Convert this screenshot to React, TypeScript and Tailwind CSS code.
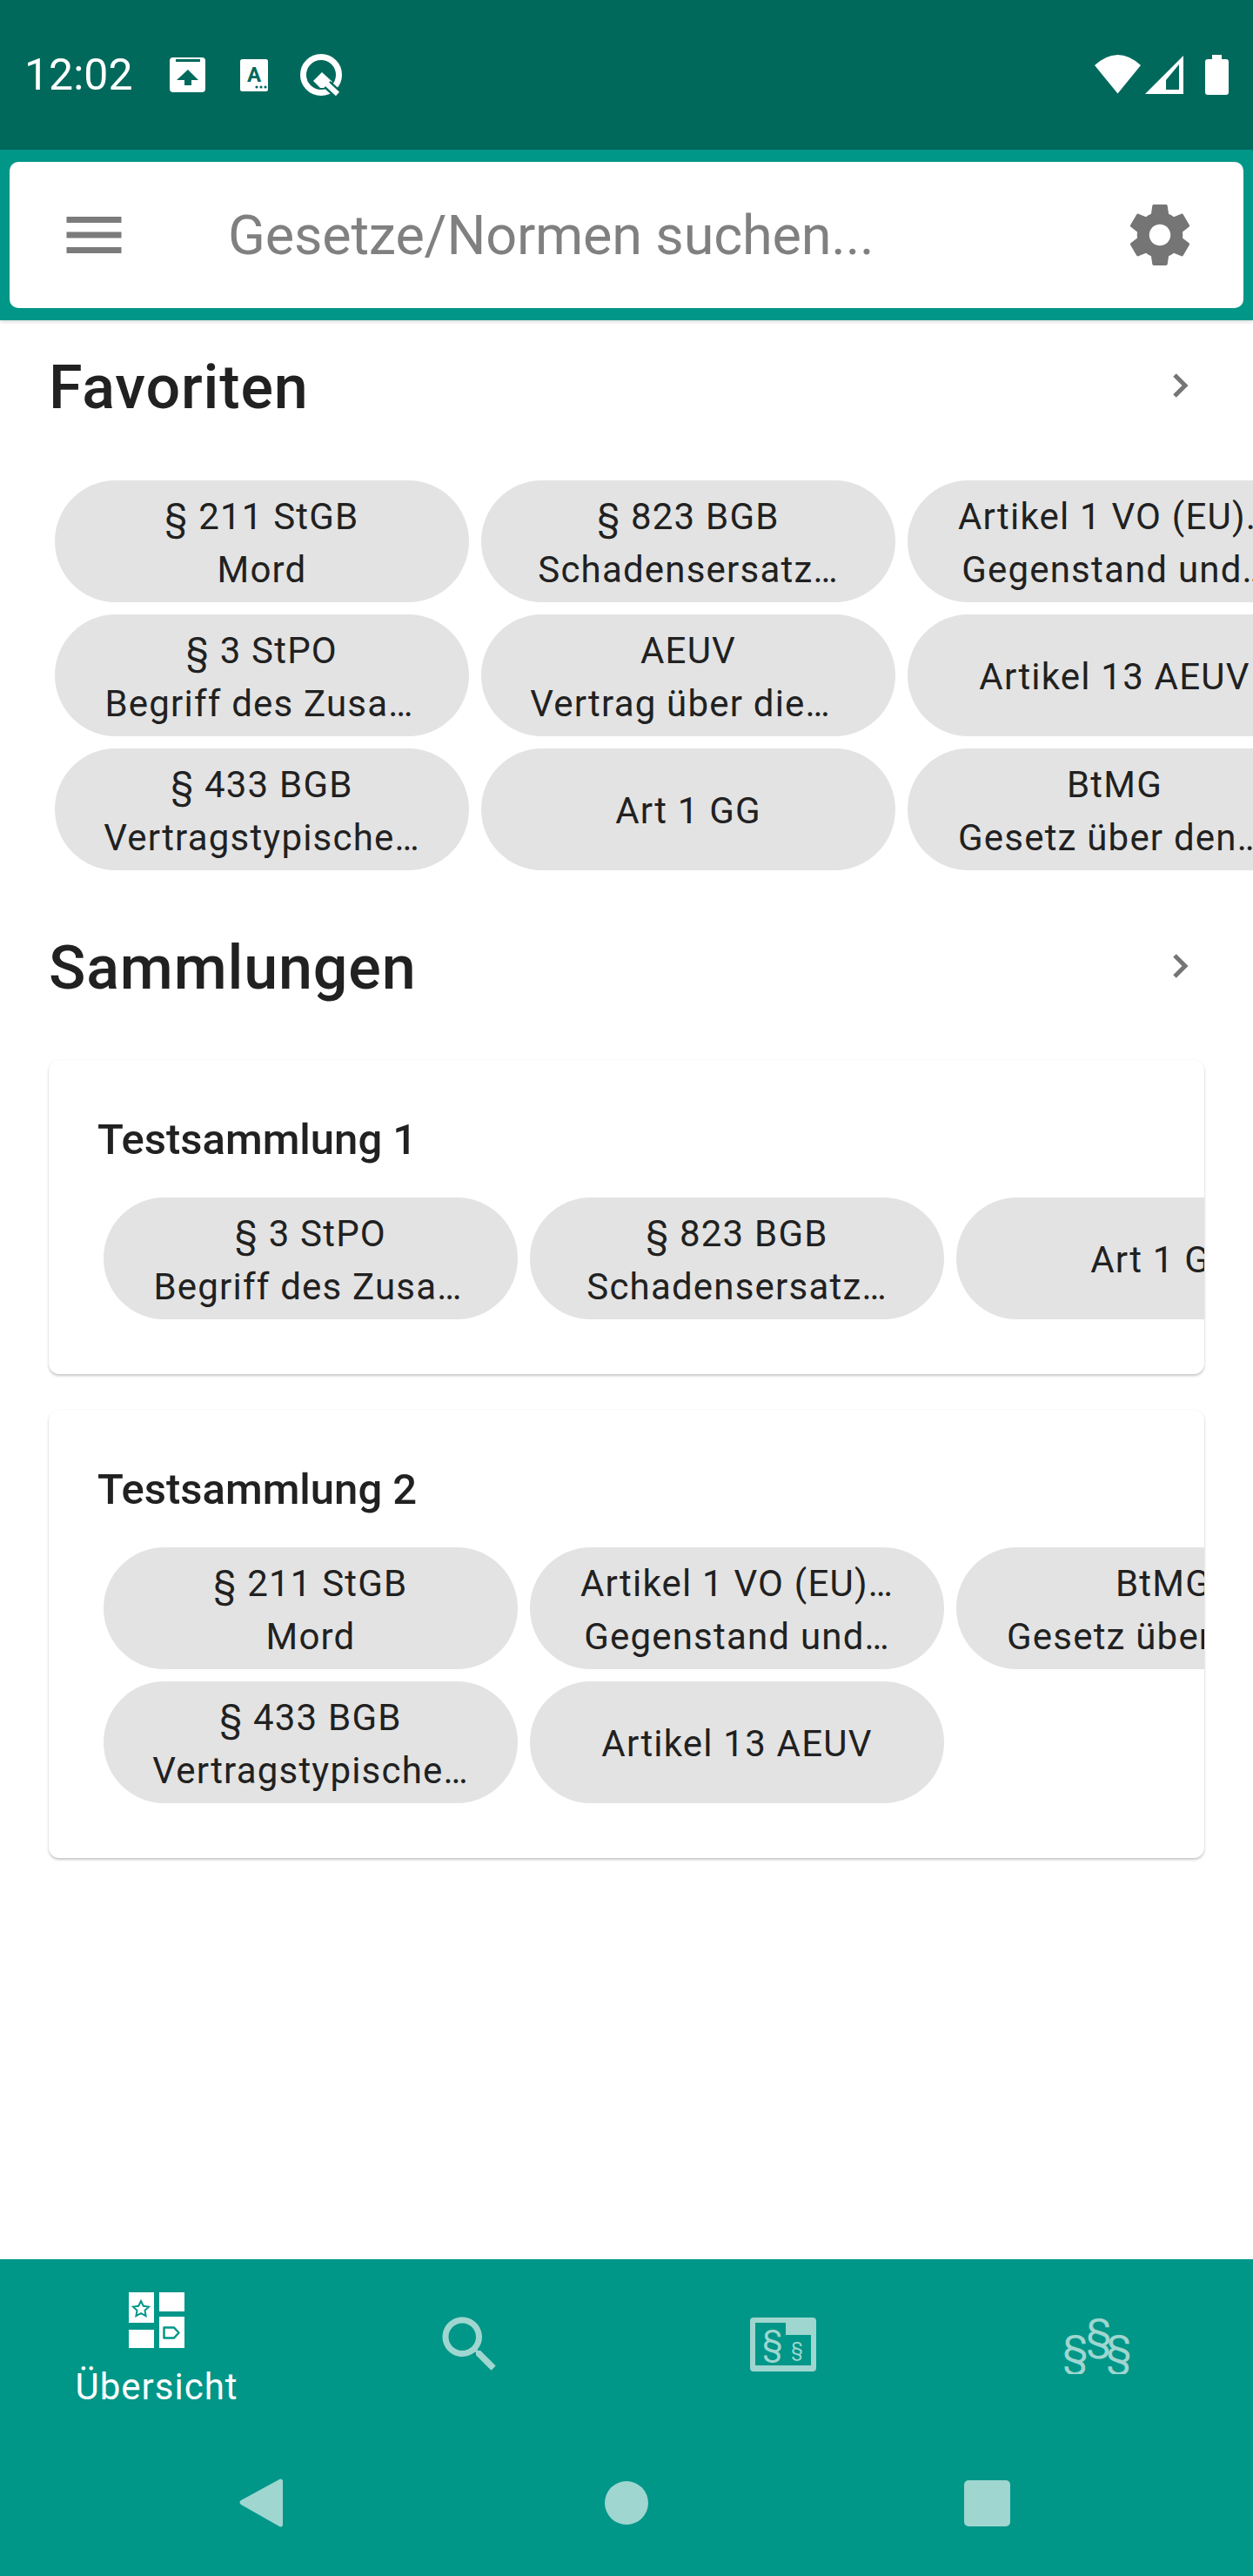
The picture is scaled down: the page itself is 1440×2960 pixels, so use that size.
const SEARCH_PATH =
  'M15.5 14h-.79l-.28-.27C15.41 12.59 16 11.11 16 9.5 16 5.91 13.09 3 9.5 3S3 5.91 3 9.5 5.91 16 9.5 16c1.61 0 3.09-.59 4.23-1.57l.27.28v.79l5 4.99L20.49 19l-4.99-5zm-6 0C7.01 14 5 11.99 5 9.5S7.01 5 9.5 5 14 7.01 14 9.5 11.99 14 9.5 14z'
const GEAR_PATH =
  'M19.43 12.98c.04-.32.07-.64.07-.98s-.03-.66-.07-.98l2.11-1.65c.19-.15.24-.42.12-.64l-2-3.46c-.12-.22-.39-.3-.61-.22l-2.49 1c-.52-.4-1.08-.73-1.69-.98l-.38-2.65C14.46 2.18 14.25 2 14 2h-4c-.25 0-.46.18-.49.42l-.38 2.65c-.61.25-1.17.59-1.69.98l-2.49-1c-.23-.09-.49 0-.61.22l-2 3.46c-.13.22-.07.49.12.64l2.11 1.65c-.04.32-.07.65-.07.98s.03.66.07.98l-2.11 1.65c-.19.15-.24.42-.12.64l2 3.46c.12.22.39.3.61.22l2.49-1c.52.4 1.08.73 1.69.98l.38 2.65c.03.24.24.42.49.42h4c.25 0 .46-.18.49-.42l.38-2.65c.61-.25 1.17-.59 1.69-.98l2.49 1c.23.09.49 0 .61-.22l2-3.46c.12-.22.07-.49-.12-.64l-2.11-1.65zM12 15.5c-1.93 0-3.5-1.57-3.5-3.5s1.57-3.5 3.5-3.5 3.5 1.57 3.5 3.5-1.57 3.5-3.5 3.5z'

interface ChipData {
  title: string
  subtitle?: string
  shift?: string
}

const favorites: ChipData[] = [
  { title: '§ 211 StGB', subtitle: 'Mord' },
  { title: '§ 823 BGB', subtitle: 'Schadensersatz…' },
  { title: 'Artikel 1 VO (EU)…', subtitle: 'Gegenstand und…' },
  { title: '§ 3 StPO', subtitle: 'Begriff des Zusa…', shift: '-translate-x-[3px]' },
  { title: 'AEUV', subtitle: 'Vertrag über die…', shift: '-translate-x-[9px]' },
  { title: 'Artikel 13 AEUV' },
  { title: '§ 433 BGB', subtitle: 'Vertragstypische…' },
  { title: 'Art 1 GG' },
  { title: 'BtMG', subtitle: 'Gesetz über den…', shift: '-translate-x-[5px]' },
]

const collectionOne: ChipData[] = [
  { title: '§ 3 StPO', subtitle: 'Begriff des Zusa…', shift: '-translate-x-[3px]' },
  { title: '§ 823 BGB', subtitle: 'Schadensersatz…' },
  { title: 'Art 1 GG' },
]

const collectionTwo: ChipData[] = [
  { title: '§ 211 StGB', subtitle: 'Mord' },
  { title: 'Artikel 1 VO (EU)…', subtitle: 'Gegenstand und…' },
  { title: 'BtMG', subtitle: 'Gesetz über den…', shift: '-translate-x-[5px]' },
  { title: '§ 433 BGB', subtitle: 'Vertragstypische…' },
  { title: 'Artikel 13 AEUV' },
]

const Chip = ({ title, subtitle, shift }: ChipData) => (
  <div className="h-[140px] w-[476px] pt-[3px] rounded-[70px] bg-[#e3e3e3] flex flex-col items-center justify-center text-[42px] leading-[61px] tracking-[1.2px] text-[#212121] whitespace-nowrap">
    <span>{title}</span>
    {subtitle && <span className={shift}>{subtitle}</span>}
  </div>
)

const ChipGrid = ({ chips }: { chips: ChipData[] }) => (
  <div className="grid grid-cols-[repeat(3,476px)] gap-[14px] overflow-hidden">
    {chips.map((chip) => (
      <Chip key={chip.title} {...chip} />
    ))}
  </div>
)

const SectionHeader = ({ title }: { title: string }) => (
  <div className="h-[154px] flex items-center justify-between pl-[56px] pr-[74px]">
    <h2 className="pt-[1px] text-[70px] tracking-[0.85px] font-medium text-[#212121]">{title}</h2>
    <svg width="18" height="28" viewBox="1348 429 18 28" fill="none" className="mb-[5px]">
      <path d="M1350 431l12 12-12 12" stroke="#757575" strokeWidth="5" />
    </svg>
  </div>
)

const CollectionCard = ({ title, chips }: { title: string; chips: ChipData[] }) => (
  <div className="mx-[56px] rounded-xl bg-white pl-[63px] pb-[63px] shadow-[0_2px_3px_rgba(0,0,0,0.22),0_0_2px_rgba(0,0,0,0.05)]">
    <h3 className="pt-[62px] pb-[36px] -ml-[7px] text-[49px] leading-[60px] font-medium text-[#212121]">
      {title}
    </h3>
    <ChipGrid chips={chips} />
  </div>
)

const StatusIcons = () => (
  <div className="flex items-center">
    <svg width="41" height="40" viewBox="195 67 41 40" className="ml-[47px]">
      <rect x="195" y="67" width="41" height="40" rx="4" fill="#fff" />
      <rect x="202" y="69" width="28" height="3" fill="#00695c" />
      <path d="M216 81l12 12h-8v6h-8v-6h-9z" fill="#00695c" />
    </svg>
    <svg width="32" height="37" viewBox="276 68 32 37" className="ml-[40px]">
      <rect x="276" y="68" width="32" height="37" rx="2.5" fill="#fff" />
      <text x="292" y="94" textAnchor="middle" fontSize="24" fontWeight="700" fill="#00695c">
        A
      </text>
      <circle cx="295" cy="100" r="1.6" fill="#00695c" />
      <circle cx="300" cy="100" r="1.6" fill="#00695c" />
      <circle cx="305" cy="100" r="1.6" fill="#00695c" />
    </svg>
    <svg width="50" height="50" viewBox="344 60 50 50" className="ml-[36px]">
      <circle cx="369" cy="85" r="20.5" fill="none" stroke="#fff" strokeWidth="7" />
      <path d="M370 82l12 11-6 7h-8l-8-8z" fill="#fff" />
      <path d="M376 96l12 11" stroke="#00695c" strokeWidth="11" />
      <path d="M374 94l14 13" stroke="#fff" strokeWidth="6" />
    </svg>
  </div>
)

const SystemIcons = () => (
  <div className="flex items-center pr-[28px]">
    <svg width="54" height="46" viewBox="1258 63 54 46">
      <path d="M1284.500 107.500 L1258 75 Q1284.500 51 1311 75 Z" fill="#fff" />
    </svg>
    <svg width="45" height="46" viewBox="1315 63 45 46" className="ml-[3px]">
      <path
        fillRule="evenodd"
        d="M1316 108L1360 64V108ZM1355 74L1340 92V103H1355Z"
        fill="#fff"
      />
    </svg>
    <svg width="27" height="46" viewBox="1385 63 27 46" className="ml-[25px]">
      <path
        d="M1393 63h11v5h5a3 3 0 0 1 3 3v35a3 3 0 0 1-3 3h-21a3 3 0 0 1-3-3V71a3 3 0 0 1 3-3h5z"
        fill="#fff"
      />
    </svg>
  </div>
)

const OverviewIcon = () => (
  <svg width="64" height="64" viewBox="148 2634 64 64">
    <rect x="148" y="2634" width="29" height="35" fill="#fff" />
    <rect x="183" y="2634" width="29" height="22" fill="#fff" />
    <rect x="148" y="2677" width="29" height="21" fill="#fff" />
    <rect x="183" y="2662" width="29" height="36" fill="#fff" />
    <path
      d="M162 2644l2.800 5.800 6.200.800-4.500 4.300 1.100 6.200-5.600-3-5.600 3 1.100-6.200-4.500-4.300 6.200-.800z"
      fill="none"
      stroke="#009688"
      strokeWidth="2"
    />
    <path
      d="M188.500 2674.500h11.500l5.500 6-5.500 6h-11.500z"
      fill="none"
      stroke="#009688"
      strokeWidth="2.500"
      strokeLinejoin="round"
    />
  </svg>
)

const SectionsIcon = () => (
  <svg width="78" height="64" viewBox="861 2662 78 64" className="text-[#9fd6d0]">
    <path
      fillRule="evenodd"
      d="M866 2663h68a4 4 0 0 1 4 4v54a4 4 0 0 1-4 4h-68a4 4 0 0 1-4-4v-54a4 4 0 0 1 4-4zM868 2669v49h64v-35h-29v-14z"
      fill="currentColor"
    />
    <text x="888" y="2705" textAnchor="middle" fontSize="38" fill="currentColor">
      §
    </text>
    <text x="916" y="2707" textAnchor="middle" fontSize="22" fill="currentColor">
      §
    </text>
  </svg>
)

const LawsIcon = () => (
  <svg width="78" height="68" viewBox="1222 2660 78 68" className="text-[#9fd6d0]">
    <text x="1262" y="2698" textAnchor="middle" fontSize="48" fill="currentColor">
      §
    </text>
    <text x="1235" y="2717" textAnchor="middle" fontSize="48" fill="currentColor">
      §
    </text>
    <text x="1285" y="2717" textAnchor="middle" fontSize="48" fill="currentColor">
      §
    </text>
  </svg>
)

const App = () => {
  return (
    <div className="w-[1440px] h-[2960px] flex flex-col bg-white font-['Roboto',sans-serif] overflow-hidden">
      <header className="h-[172px] bg-[#00695c] flex items-center justify-between">
        <div className="flex items-center pl-[28px]">
          <span className="w-[120px] text-[50px] text-white">12:02</span>
          <StatusIcons />
        </div>
        <SystemIcons />
      </header>

      <div className="relative bg-[#009688] px-[11px] py-[14px] shadow-[0_2px_4px_rgba(0,0,0,0.14)]">
        <div className="h-[168px] rounded-[10px] bg-white flex items-center pl-[55px] pr-[54px]">
          <svg width="84" height="84" viewBox="0 0 24 24" fill="#7b7b7b" className="shrink-0">
            <path d="M3 18h18v-2H3v2zm0-5h18v-2H3v2zm0-7v2h18V6H3z" />
          </svg>
          <span className="ml-[112px] pt-[3px] text-[63px] tracking-[-0.2px] text-[#808080] flex-1">
            Gesetze/Normen suchen...
          </span>
          <svg width="84" height="84" viewBox="0 0 24 24" fill="#757575" className="shrink-0">
            <path d={GEAR_PATH} />
          </svg>
        </div>
      </div>

      <main className="flex-1">
        <SectionHeader title="Favoriten" />
        <div className="mt-[30px] pl-[63px]">
          <ChipGrid chips={favorites} />
        </div>
        <div className="mt-[35px]">
          <SectionHeader title="Sammlungen" />
        </div>
        <div className="mt-[29px] flex flex-col gap-[41px]">
          <CollectionCard title="Testsammlung 1" chips={collectionOne} />
          <CollectionCard title="Testsammlung 2" chips={collectionTwo} />
        </div>
      </main>

      <footer className="h-[364px] bg-[#009688] flex flex-col">
        <nav className="h-[252px] grid grid-cols-4">
          <div className="flex flex-col items-center pt-[38px]">
            <OverviewIcon />
            <span className="mt-[15px] text-[42px] leading-[60px] tracking-[1px] text-white">Übersicht</span>
          </div>
          <div className="flex justify-center pt-[56px]">
            <svg width="84" height="84" viewBox="0 0 24 24" fill="#9fd6d0">
              <path d={SEARCH_PATH} />
            </svg>
          </div>
          <div className="flex justify-center pt-[66px]">
            <SectionsIcon />
          </div>
          <div className="flex justify-center pt-[64px] pl-[3px]">
            <LawsIcon />
          </div>
        </nav>
        <div className="flex items-center pl-[275px]">
          <svg width="50" height="56" viewBox="275 2848 50 56" fill="#9fd6d0">
            <path d="M321 2849c2-1.500 4 0 4 2v50c0 2-2 3.500-4 2l-44-25c-2-1.500-2-4 0-5z" />
          </svg>
          <div className="ml-[370px] h-[50px] w-[50px] rounded-full bg-[#9fd6d0]" />
          <div className="ml-[363px] h-[53px] w-[53px] rounded-[5px] bg-[#9fd6d0]" />
        </div>
      </footer>
    </div>
  )
}

export default App
